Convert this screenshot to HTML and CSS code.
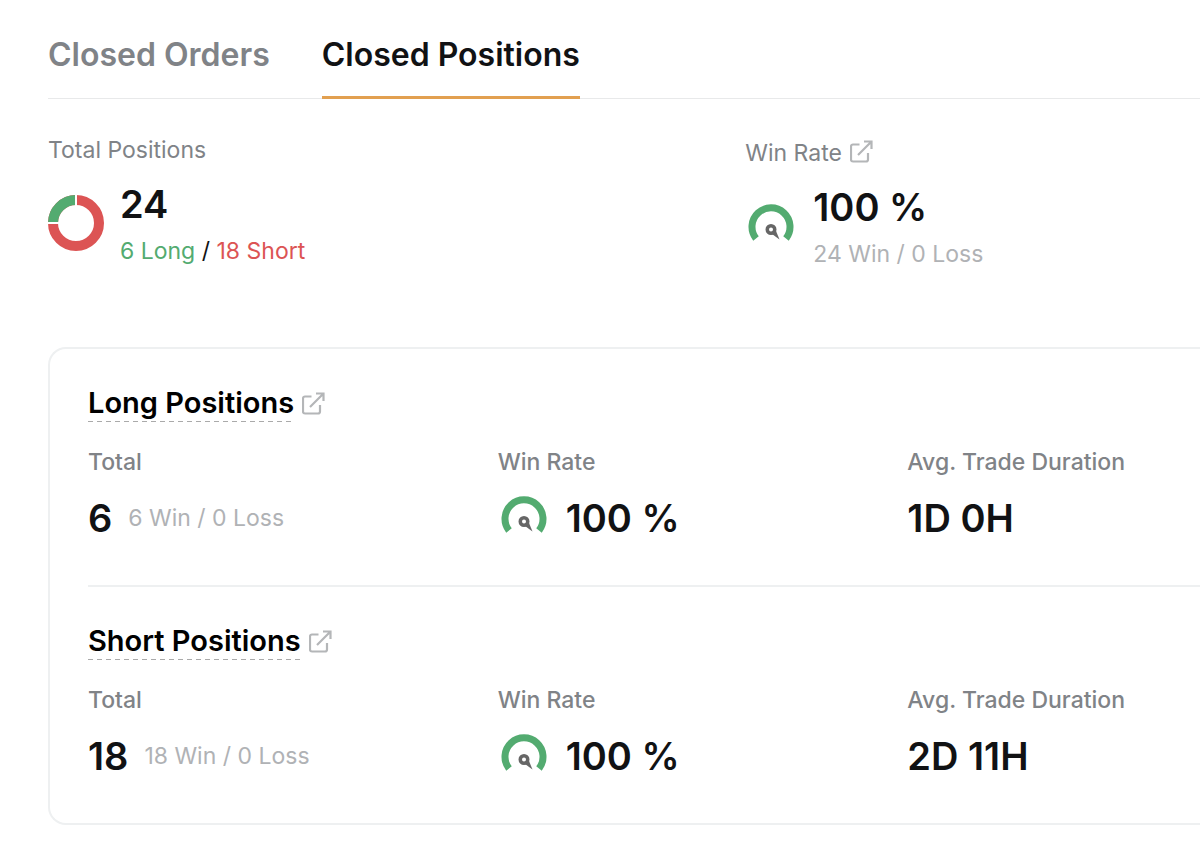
FILE: index.html
```html
<!DOCTYPE html>
<html lang="en">
<head>
  <meta charset="UTF-8">
  <meta name="viewport" content="width=device-width, initial-scale=1.0">
  <title>Closed Positions</title>
  <link rel="stylesheet" href="styles.css">
</head>
<body>
  <!-- Shared icons -->
  <svg class="sprite" aria-hidden="true">
    <symbol id="icon-external" viewBox="0 0 23 23">
      <path d="M9.500 4.500H3a2 2 0 0 0-2 2v13a2 2 0 0 0 2 2h13a2 2 0 0 0 2-2V13M14 1.500h7.500V9M21 2L8 15" fill="none" stroke="currentColor" stroke-width="2.200"/>
    </symbol>
    <symbol id="icon-gauge" viewBox="0 0 52 52">
      <path d="M11 38.500A19 19 0 1 1 41 38.500" fill="none" stroke="#53ab70" stroke-width="7"/>
      <path d="M27 34L34.500 39.500L31 31Z" fill="#666"/>
      <circle cx="26" cy="29.500" r="3.750" fill="#fff" stroke="#666" stroke-width="3.500"/>
    </symbol>
  </svg>

  <nav class="tabs">
    <button type="button" class="tab">Closed Orders</button>
    <button type="button" class="tab active">Closed Positions</button>
  </nav>

  <!-- Summary -->
  <div class="summary">
    <div class="summary-item">
      <div class="label">Total Positions</div>
      <div class="stat">
        <svg class="donut" viewBox="0 0 56 56" aria-hidden="true">
          <circle cx="28" cy="28" r="23" fill="none" stroke="#dc5454" stroke-width="10"/>
          <path d="M5 28A23 23 0 0 1 28 5" fill="none" stroke="#53ab70" stroke-width="10"/>
          <path d="M28 0V12M0 28H12" stroke="#fff" stroke-width="2"/>
        </svg>
        <div>
          <div class="value">24</div>
          <div class="detail"><span class="long">6 Long</span> / <span class="short">18 Short</span></div>
        </div>
      </div>
    </div>
    <div class="summary-item">
      <div class="label label-link">Win Rate <a href="#win-rate" aria-label="Open win rate"><svg class="external"><use href="#icon-external"/></svg></a></div>
      <div class="stat">
        <svg class="gauge" aria-hidden="true"><use href="#icon-gauge"/></svg>
        <div>
          <div class="value">100 %</div>
          <div class="detail muted">24 Win / 0 Loss</div>
        </div>
      </div>
    </div>
  </div>

  <!-- Long / short breakdown -->
  <div class="card">
    <section class="section">
      <div class="section-title">
        <h2>Long Positions</h2>
        <a href="#long" aria-label="Open long positions"><svg class="external"><use href="#icon-external"/></svg></a>
      </div>
      <div class="columns">
        <div>
          <div class="label">Total</div>
          <div class="row"><span class="value">6</span><span class="muted">6 Win / 0 Loss</span></div>
        </div>
        <div>
          <div class="label">Win Rate</div>
          <div class="row"><svg class="gauge" aria-hidden="true"><use href="#icon-gauge"/></svg><span class="value">100 %</span></div>
        </div>
        <div>
          <div class="label">Avg. Trade Duration</div>
          <div class="row"><span class="value">1D 0H</span></div>
        </div>
      </div>
    </section>
    <section class="section">
      <div class="section-title">
        <h2>Short Positions</h2>
        <a href="#short" aria-label="Open short positions"><svg class="external"><use href="#icon-external"/></svg></a>
      </div>
      <div class="columns">
        <div>
          <div class="label">Total</div>
          <div class="row"><span class="value">18</span><span class="muted">18 Win / 0 Loss</span></div>
        </div>
        <div>
          <div class="label">Win Rate</div>
          <div class="row"><svg class="gauge" aria-hidden="true"><use href="#icon-gauge"/></svg><span class="value">100 %</span></div>
        </div>
        <div>
          <div class="label">Avg. Trade Duration</div>
          <div class="row"><span class="value">2D 11H</span></div>
        </div>
      </div>
    </section>
  </div>
</body>
</html>
```
FILE: styles.css
```css
* {
  box-sizing: border-box;
}
body {
  margin: 0;
  padding: 31px 0 24px 48px;
  font-family: Inter, sans-serif;
  font-size: 23px;
  line-height: 30px;
  color: #111214;
  background-color: #fff;
}
svg {
  display: block;
  flex-shrink: 0;
}
.sprite {
  display: none;
}
.tabs {
  display: flex;
  gap: 52px;
  box-shadow: inset 0 -1px #e8e9ea;
}
.tab {
  padding: 0 0 17px;
  border: none;
  border-bottom: 3px solid transparent;
  background: none;
  font-family: inherit;
  font-size: 32px;
  font-weight: 600;
  line-height: 48px;
  color: #808387;
  cursor: pointer;
}
.tab.active {
  color: #111214;
  border-bottom-color: #e2a050;
}
.summary {
  display: grid;
  grid-template-columns: 23fr 15fr;
  margin-top: 36px;
}
.label {
  color: #808387;
}
.card .label {
  font-weight: 500;
}
.label-link {
  display: flex;
  align-items: flex-end;
  gap: 8px;
  height: 33px;
}
.label-link a {
  padding-bottom: 5px;
}
a {
  color: #b4b6b8;
}
.external {
  width: 23px;
  height: 23px;
}
.stat {
  display: flex;
  align-items: center;
  gap: 16px;
  margin-top: 15px;
}
.donut {
  width: 56px;
  height: 56px;
}
.gauge {
  width: 52px;
  height: 52px;
}
.value {
  font-size: 38px;
  font-weight: 600;
  line-height: 48px;
}
.detail {
  margin-top: 8px;
}
.muted {
  color: #b0b2b5;
}
.long {
  color: #53ab70;
}
.short {
  color: #dc5454;
}
.card {
  margin-top: 78px;
  padding-left: 38px;
  border: 2px solid #eef0f1;
  border-right: none;
  border-radius: 18px 0 0 18px;
}
.section {
  padding: 36px 0 41px;
}
.section + .section {
  border-top: 2px solid #eef0f1;
}
.section-title {
  display: flex;
  align-items: center;
  gap: 8px;
  margin-bottom: 25px;
}
h2 {
  margin: 0;
  padding-bottom: 1px;
  font-size: 29px;
  font-weight: 600;
  line-height: 36px;
  color: #000;
  background: repeating-linear-gradient(90deg, #aaa 0 5px, transparent 5px 9px) bottom / 100% 1px no-repeat;
}
.columns {
  display: grid;
  grid-template-columns: 7fr 7fr 5fr;
}
.row {
  display: flex;
  align-items: center;
  gap: 16px;
  height: 52px;
  margin-top: 15px;
}
```
